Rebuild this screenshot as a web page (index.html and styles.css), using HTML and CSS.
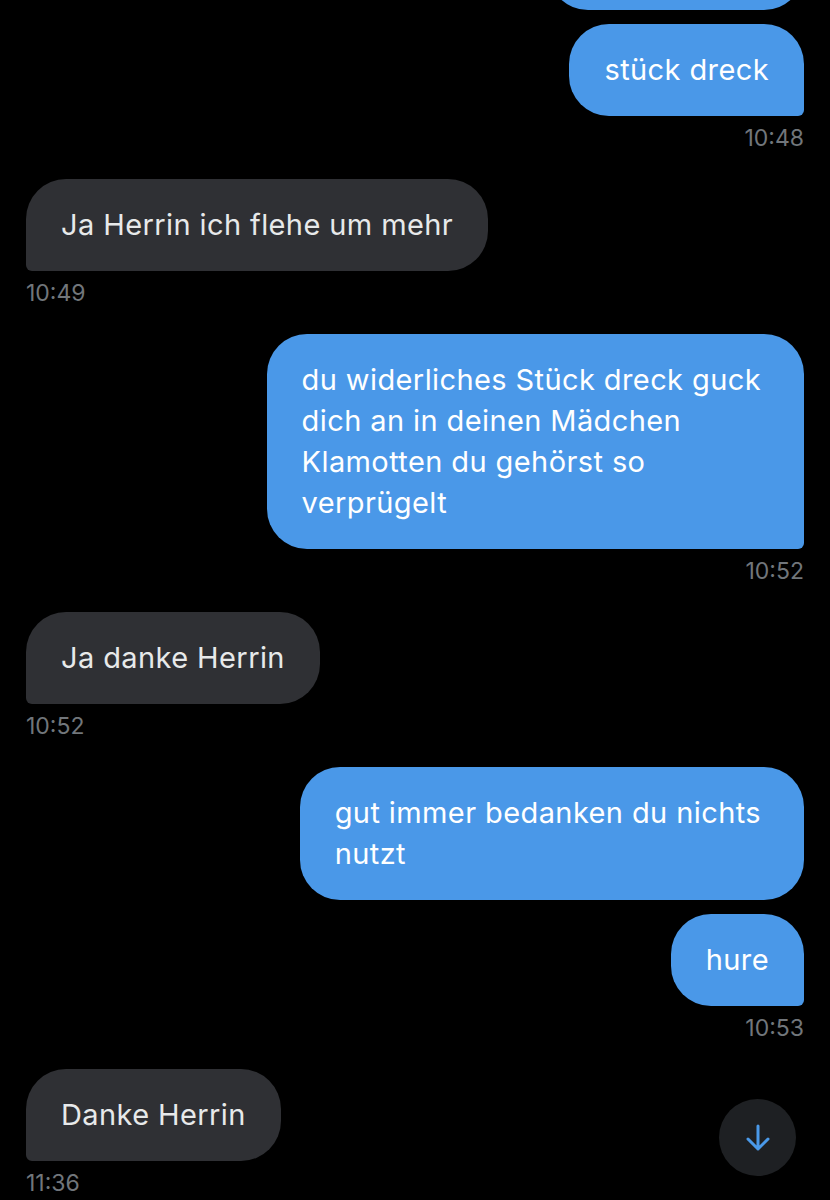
FILE: index.html
```html
<!DOCTYPE html>
<html>
    <head>
        <title>Nachrichten</title>
        <link rel="stylesheet" href="styles.css">
    </head>
    <body>
        <div class="chat">

            <!-- sent: 10:48 -->
            <div class="group sent">
                <div class="bubble cut"></div>
                <div class="bubble last">stück dreck</div>
                <div class="time">10:48</div>
            </div>

            <div class="group recv">
                <div class="bubble last">Ja Herrin ich flehe um mehr</div>
                <div class="time">10:49</div>
            </div>

            <div class="group sent">
                <div class="bubble multi last">du widerliches Stück dreck guck<br>dich an in deinen Mädchen<br>Klamotten du gehörst so<br>verprügelt</div>
                <div class="time">10:52</div>
            </div>

            <div class="group recv">
                <div class="bubble last">Ja danke Herrin</div>
                <div class="time">10:52</div>
            </div>

            <div class="group sent">
                <div class="bubble multi">gut immer bedanken du nichts<br>nutzt</div>
                <div class="bubble last">hure</div>
                <div class="time">10:53</div>
            </div>

            <div class="group recv">
                <div class="bubble last">Danke Herrin</div>
                <div class="time">11:36</div>
            </div>

            <!-- scroll to bottom -->
            <div class="scrolldown">
                <svg width="26" height="28" viewBox="0 0 26 28">
                    <path d="M13 2 V25 M3 15 L13 25 L23 15" fill="none" stroke="#4a99e9" stroke-width="3" stroke-linecap="round" stroke-linejoin="round"/>
                </svg>
            </div>
        </div>
    </body>
</html>
```

FILE: styles.css
```css
html, body {
    margin: 0;
    background: #000;
}

body {
    font-family: "Inter", "Noto Sans", sans-serif;
    height: 1200px;
    overflow: hidden;
}

.chat {
    position: relative;
    padding: 0 26px;
    height: 1200px;
}

.group {
    display: flex;
    flex-direction: column;
    gap: 14px;
    margin-bottom: 27px;
}

.sent {
    align-items: flex-end;
}

.recv {
    align-items: flex-start;
}

.bubble {
    font-size: 29px;
    letter-spacing: 0.4px;
    line-height: 41px;
    padding: 25px 35px 26px;
    border-radius: 40px;
    white-space: nowrap;
}

/* wrapped messages keep some room on the right */
.bubble.multi {
    padding-right: 43px;
}

.sent .bubble {
    background: #4a98e8;
    color: #fff;
}

.recv .bubble {
    background: #2f3034;
    color: #e7e9ea;
}

.sent .bubble.last {
    border-bottom-right-radius: 6px;
}

.recv .bubble.last {
    border-bottom-left-radius: 6px;
}

/* bottom of the bubble that scrolled away */
.bubble.cut {
    width: 186px;
    height: 41px;
    margin-top: -82px;
}

.time {
    margin-top: -6px;
    font-size: 23px;
    line-height: 28px;
    color: #71767b;
}

.scrolldown {
    position: absolute;
    left: 719px;
    top: 1099px;
    width: 77px;
    height: 77px;
    border-radius: 50%;
    background: #1e2023;
    display: flex;
    align-items: center;
    justify-content: center;
}
```
